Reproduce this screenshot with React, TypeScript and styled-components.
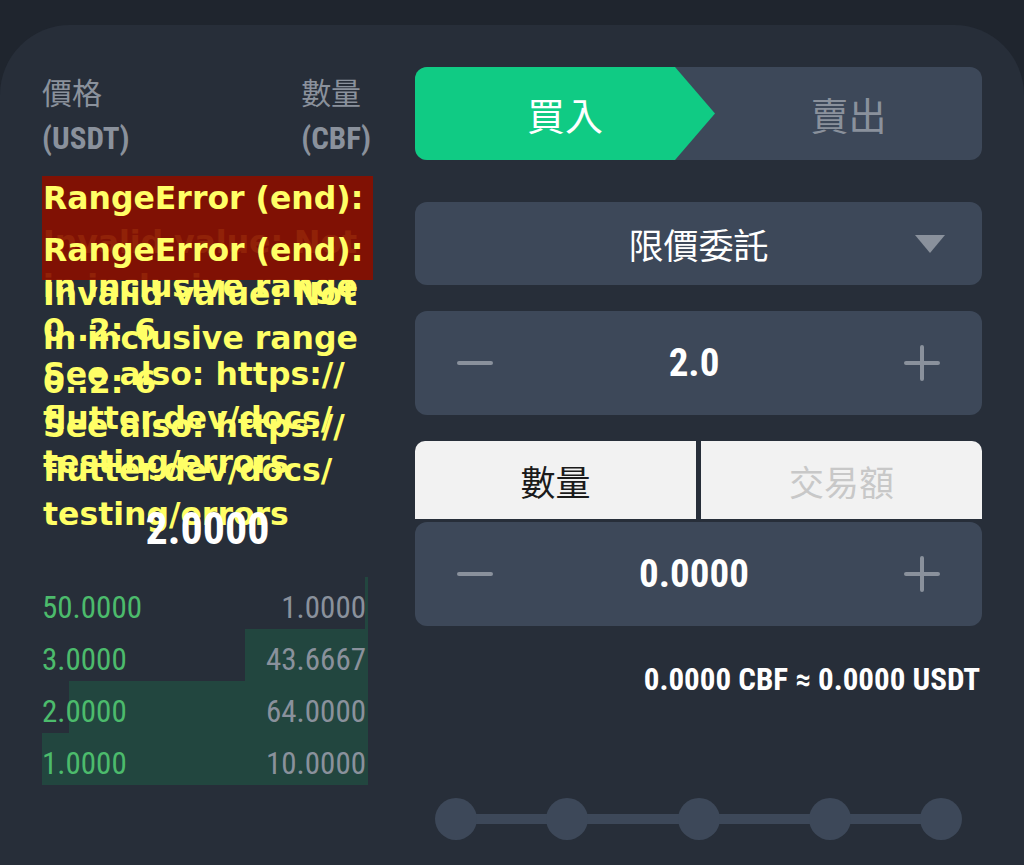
import React from "react";
import styled, { createGlobalStyle } from "styled-components";

const NUM = `"Roboto", "Liberation Sans", sans-serif`;
const CJK = `"Noto Sans CJK TC", "Noto Sans", sans-serif`;

const GlobalStyle = createGlobalStyle`
  html, body { margin: 0; padding: 0; background: #1f252e; }
  body { font-family: ${CJK}; }
  * { box-sizing: border-box; }
`;

const Screen = styled.div`
  width: 1024px;
  height: 865px;
  padding-top: 25px;
  overflow: hidden;
  background: #1f252e;
`;

const Card = styled.div`
  height: 840px;
  background: #272e39;
  border-radius: 70px 70px 0 0;
  padding: 42px 42px 0;
  display: flex;
  gap: 42px;
`;

/* ---------- order book ---------- */

const Book = styled.section`
  width: 331px;
  display: flex;
  flex-direction: column;
`;

const BookHeader = styled.div`
  display: flex;
  justify-content: space-between;
  padding-right: 2px;
  color: #8a919c;
`;

const HeadLabel = styled.div`
  font-family: ${CJK};
  font-size: 30px;
  line-height: 48px;
`;

const HeadUnit = styled.div`
  font-family: ${NUM};
  font-stretch: 75%;
  font-weight: 700;
  font-size: 31px;
  line-height: 48px;
`;

const SellArea = styled.div`
  position: relative;
  height: 327px;
  margin-top: 13px;
`;

const ErrorBlock = styled.div<{ $top: number }>`
  position: absolute;
  left: 0;
  right: 0;
  top: ${(p) => p.$top}px;
`;

const ErrorBand = styled.div`
  position: absolute;
  top: 0;
  left: 0;
  right: 0;
  height: 52px;
  background: rgba(136, 15, 0, 0.92);
`;

const ErrorText = styled.div`
  position: relative;
  padding-left: 1px;
  font-family: "DejaVu Sans", sans-serif;
  font-weight: 700;
  font-size: 31.5px;
  line-height: 44px;
  color: #ffff66;
  white-space: nowrap;
`;

const MidPrice = styled.div`
  position: relative;
  height: 52px;
  line-height: 52px;
  text-align: center;
  font-family: ${NUM};
  font-stretch: 75%;
  font-weight: 700;
  font-size: 44px;
  color: #ffffff;
`;

const BuyList = styled.div`
  margin-top: 22px;
  margin-right: 5px;
`;

const BuyRow = styled.div`
  position: relative;
  height: 52px;
  padding: 10px 2px 0 0;
  display: flex;
  justify-content: space-between;
  align-items: center;
  font-family: ${NUM};
  font-stretch: 75%;
  font-size: 31px;
  line-height: 34px;
`;

const DepthBar = styled.div`
  position: absolute;
  top: 0;
  right: 0;
  bottom: 0;
  background: #22463f;
`;

const Cell = styled.span<{ $tone: "price" | "amount" }>`
  position: relative;
  color: ${(p) => (p.$tone === "price" ? "#4cbb6c" : "#8a919c")};
`;

/* ---------- trade form ---------- */

const Form = styled.section`
  flex: 1;
  display: flex;
  flex-direction: column;
`;

const SideToggle = styled.div`
  height: 93px;
  border-radius: 12px;
  background: #3d4859;
  display: flex;
  overflow: hidden;
`;

const SideTab = styled.div<{ $active?: boolean }>`
  display: flex;
  align-items: center;
  justify-content: center;
  font-size: 38px;
  ${(p) =>
    p.$active
      ? `
    width: 300px;
    background: #10cb84;
    color: #ffffff;
    clip-path: polygon(0 0, 260px 0, 100% 50%, 260px 100%, 0 100%);
  `
      : `
    flex: 1;
    color: #8a919c;
  `}
`;

const Select = styled.div`
  margin-top: 42px;
  height: 83px;
  border-radius: 12px;
  background: #3d4859;
  display: grid;
  grid-template-columns: 1fr auto 1fr;
  align-items: center;
  padding: 0 37px;
  color: #ffffff;
  font-size: 35px;
`;

const SelectLabel = styled.span`
  grid-column: 2;
`;

const Caret = styled.svg`
  grid-column: 3;
  justify-self: end;
`;

const Stepper = styled.div<{ $gap: number }>`
  margin-top: ${(p) => p.$gap}px;
  height: 104px;
  border-radius: 12px;
  background: #3d4859;
  display: flex;
  align-items: center;
  justify-content: space-between;
  padding: 0 42px;
`;

const StepValue = styled.div`
  padding-right: 9px;
  font-family: ${NUM};
  font-stretch: 75%;
  font-weight: 700;
  font-size: 39px;
  line-height: 1;
  color: #ffffff;
`;

const ModeTabs = styled.div`
  margin-top: 26px;
  height: 78px;
  display: flex;
  gap: 5px;
`;

const ModeTab = styled.div<{ $active?: boolean; $side: "left" | "right" }>`
  flex: 1;
  display: flex;
  align-items: center;
  justify-content: center;
  background: #f2f2f2;
  border-radius: ${(p) => (p.$side === "left" ? "10px 0 0 0" : "0 10px 0 0")};
  font-size: 35px;
  color: ${(p) => (p.$active ? "#1b1b1b" : "#c8c8c8")};
`;

const Summary = styled.div`
  margin-top: 34px;
  padding-right: 2px;
  text-align: right;
  font-family: ${NUM};
  font-stretch: 75%;
  font-weight: 700;
  font-size: 31px;
  line-height: 40px;
  color: #ffffff;
`;

const Slider = styled.svg`
  margin-top: 98px;
  display: block;
`;

const Minus = () => (
  <svg width="36" height="36" viewBox="0 0 36 36">
    <path d="M2 18H34" stroke="#8a919c" strokeWidth="4" strokeLinecap="round" />
  </svg>
);

const Plus = () => (
  <svg width="36" height="36" viewBox="0 0 36 36">
    <path d="M2 18H34M18 2V34" stroke="#8a919c" strokeWidth="4" strokeLinecap="round" />
  </svg>
);

const errorLines = [
  "RangeError (end):",
  "Invalid value: Not",
  "in inclusive range",
  "0..2: 6",
  "See also: https://",
  "flutter.dev/docs/",
  "testing/errors",
];

const buys = [
  { price: "50.0000", amount: 1 },
  { price: "3.0000", amount: 43.6667 },
  { price: "2.0000", amount: 64 },
  { price: "1.0000", amount: 10 },
];

const total = buys.reduce((s, b) => s + b.amount, 0);

const sliderStops = [41, 152, 284, 415, 526];

export default function App() {
  let running = 0;
  return (
    <>
      <GlobalStyle />
      <Screen>
        <Card>
          <Book>
            <BookHeader>
              <div>
                <HeadLabel>價格</HeadLabel>
                <HeadUnit>(USDT)</HeadUnit>
              </div>
              <div>
                <HeadLabel>數量</HeadLabel>
                <HeadUnit>(CBF)</HeadUnit>
              </div>
            </BookHeader>

            <SellArea>
              {[0, 52].map((top) => (
                <ErrorBlock key={top} $top={top}>
                  <ErrorBand />
                  <ErrorText>
                    {errorLines.map((l) => (
                      <div key={l}>{l}</div>
                    ))}
                  </ErrorText>
                </ErrorBlock>
              ))}
            </SellArea>

            <MidPrice>2.0000</MidPrice>

            <BuyList>
              {buys.map((b) => {
                running += b.amount;
                return (
                  <BuyRow key={b.price}>
                    <DepthBar style={{ width: `${(running / total) * 100}%` }} />
                    <Cell $tone="price">{b.price}</Cell>
                    <Cell $tone="amount">{b.amount.toFixed(4)}</Cell>
                  </BuyRow>
                );
              })}
            </BuyList>
          </Book>

          <Form>
            <SideToggle>
              <SideTab $active>買入</SideTab>
              <SideTab>賣出</SideTab>
            </SideToggle>

            <Select>
              <SelectLabel>限價委託</SelectLabel>
              <Caret width="30" height="18" viewBox="0 0 30 18">
                <path d="M0 0H30L15 18Z" fill="#8a919c" />
              </Caret>
            </Select>

            <Stepper $gap={26}>
              <Minus />
              <StepValue>2.0</StepValue>
              <Plus />
            </Stepper>

            <ModeTabs>
              <ModeTab $side="left" $active>
                數量
              </ModeTab>
              <ModeTab $side="right">交易額</ModeTab>
            </ModeTabs>

            <Stepper $gap={3}>
              <Minus />
              <StepValue>0.0000</StepValue>
              <Plus />
            </Stepper>

            <Summary>0.0000 CBF ≈ 0.0000 USDT</Summary>

            <Slider width="567" height="42" viewBox="0 0 567 42">
              <rect x="41" y="16" width="485" height="10" fill="#3d4859" />
              {sliderStops.map((x) => (
                <circle key={x} cx={x} cy="21" r="21" fill="#3d4859" />
              ))}
            </Slider>
          </Form>
        </Card>
      </Screen>
    </>
  );
}
